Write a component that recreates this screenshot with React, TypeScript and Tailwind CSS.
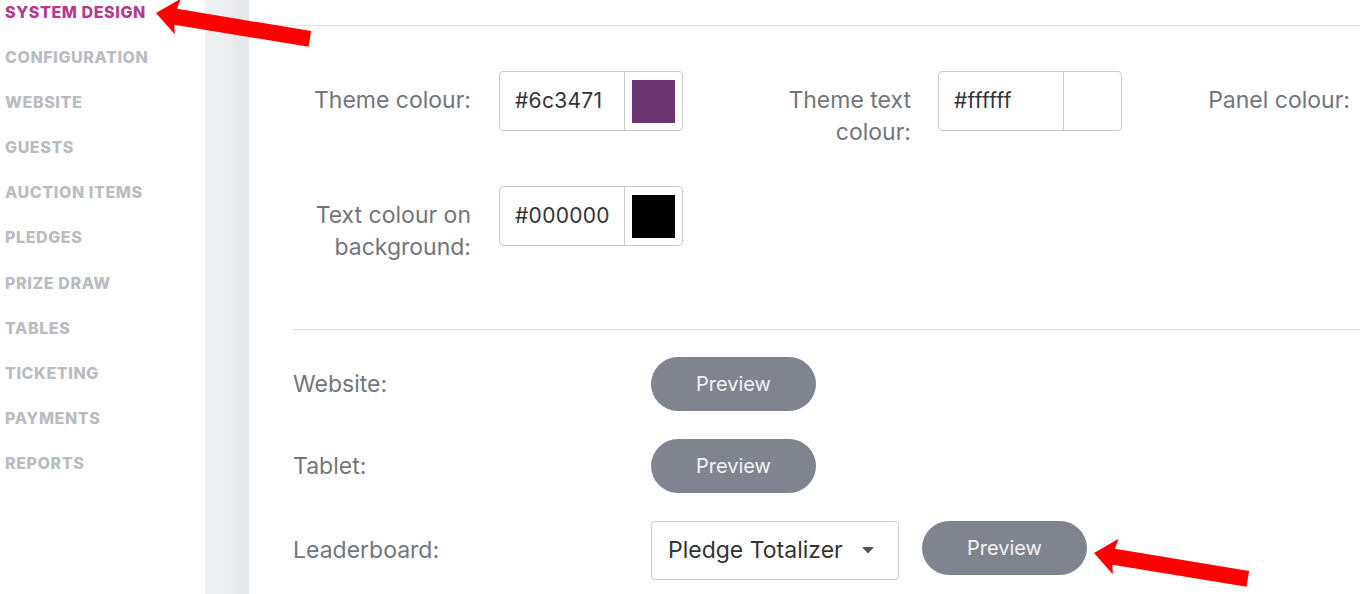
import React from "react";

const navItems = [
  "SYSTEM DESIGN",
  "CONFIGURATION",
  "WEBSITE",
  "GUESTS",
  "AUCTION ITEMS",
  "PLEDGES",
  "PRIZE DRAW",
  "TABLES",
  "TICKETING",
  "PAYMENTS",
  "REPORTS",
];

const font = { fontFamily: "Inter, 'Open Sans', sans-serif" };

function ColourField({ value, swatch }: { value: string; swatch: string }) {
  return (
    <div className="flex h-[60px] w-[184px] shrink-0 overflow-hidden rounded-[4px] border border-[#c9cbcf] bg-white">
      <div className="w-[124px] pl-[15px] pr-[15px] pt-[14px] text-[21px] leading-[30px] tracking-[0.3px] text-[#333]">
        <div className="overflow-hidden whitespace-nowrap">{value}</div>
      </div>
      <div className="flex flex-1 items-center justify-center border-l border-[#c9cbcf]">
        <div className="h-[43px] w-[43px]" style={{ backgroundColor: swatch }} />
      </div>
    </div>
  );
}

function Label({ children, width }: { children: React.ReactNode; width: string }) {
  return (
    <div className={`${width} shrink-0 pt-[13px] text-right text-[23px] leading-[32px] text-[#72767c]`}>
      {children}
    </div>
  );
}

function PreviewButton() {
  return (
    <button className="h-[54px] w-[165px] shrink-0 rounded-full bg-[#80848f] text-[20px] text-[#f3f3f5]">
      Preview
    </button>
  );
}

function Arrow({ x, y }: { x: number; y: number }) {
  return (
    <g transform={`translate(${x} ${y}) rotate(9.4)`}>
      <polygon points="0,0 22,-18 20,-7.5 156,-7.5 156,8.5 20,8.5 22,18" fill="#ff0000" />
    </g>
  );
}

export default function App() {
  return (
    <div className="relative flex h-[594px] w-[1360px] overflow-hidden bg-white" style={font}>
      <aside className="w-[205px] shrink-0 pl-[5px] pt-[2px]">
        {navItems.map((item, i) => (
          <div
            key={item}
            className={`h-[45.1px] text-[16px] font-extrabold leading-[20px] tracking-[0.6px] ${
              i === 0 ? "text-[#b5398f]" : "text-[#b9bcc1]"
            }`}
          >
            {item}
          </div>
        ))}
      </aside>
      <div className="w-[44px] shrink-0 bg-linear-to-r from-[#eef0f2] via-[#eceef0] to-[#e3e5e8]" />
      <main className="flex-1">
        <div className="h-[26px] border-b border-[#e4e4e4]" />
        <div className="pl-[44px] pt-[45px]">
          <div className="flex items-start">
            <Label width="w-[178px]">Theme colour:</Label>
            <div className="ml-[28px]">
              <ColourField value="#6c3471" swatch="#6c3471" />
            </div>
            <Label width="w-[228px]">
              Theme text
              <br />
              colour:
            </Label>
            <div className="ml-[27px]">
              <ColourField value="#ffffff" swatch="#ffffff" />
            </div>
            <Label width="w-[228px]">Panel colour:</Label>
          </div>
          <div className="mt-[38px] flex items-start">
            <Label width="w-[178px]">
              Text colour on
              <br />
              background:
            </Label>
            <div className="ml-[28px]">
              <ColourField value="#000000" swatch="#000000" />
            </div>
          </div>
          <div className="mt-[66px] border-t border-[#e1e1e1]" />
          <div className="flex flex-col gap-[28px] pt-[27px]">
            <div className="flex items-center">
              <div className="w-[358px] text-[23px] text-[#72767c]">Website:</div>
              <PreviewButton />
            </div>
            <div className="flex items-center">
              <div className="w-[358px] text-[23px] text-[#72767c]">Tablet:</div>
              <PreviewButton />
            </div>
            <div className="flex items-center">
              <div className="w-[358px] text-[23px] text-[#72767c]">Leaderboard:</div>
              <div className="flex h-[59px] w-[248px] shrink-0 items-center justify-between rounded-[4px] border border-[#c9cbcf] pl-[16px] pr-[24px] text-[23px] text-[#333]">
                <span>Pledge Totalizer</span>
                <svg width="12" height="7" viewBox="0 0 12 7">
                  <polygon points="0,0 12,0 6,6.5" fill="#555" />
                </svg>
              </div>
              <div className="ml-[23px] -mt-[5px]">
                <PreviewButton />
              </div>
            </div>
          </div>
        </div>
      </main>
      <svg className="pointer-events-none absolute left-0 top-0" width="1360" height="594">
        <Arrow x={156} y={13} />
        <Arrow x={1094} y={553} />
      </svg>
    </div>
  );
}
